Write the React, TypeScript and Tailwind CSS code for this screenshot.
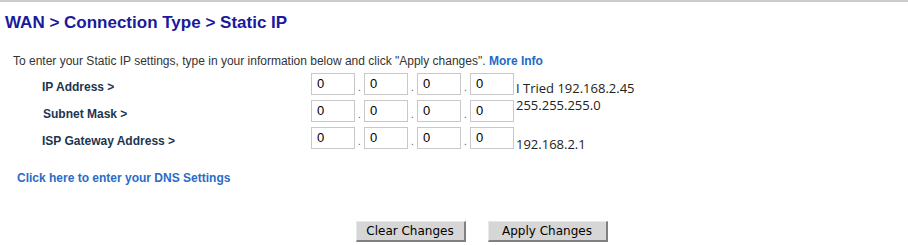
import React from "react";

const rows = [
  { label: "IP Address >", note: "I Tried 192.168.2.45", noteCls: "mt-[7px]", lcls: "pl-[42px]" },
  { label: "Subnet Mask >", note: "255.255.255.0", noteCls: "-mt-[3px]", lcls: "pl-[43px]" },
  { label: "ISP Gateway Address >", note: "192.168.2.1", noteCls: "mt-[9px]", lcls: "pl-[42px]" },
];

function Octet() {
  return (
    <div className="w-[44px] h-[22px] border border-[#c8c8c8] bg-white pl-[5px] text-[13px] leading-[20px] text-black [font-family:'Liberation_Sans',Arial,sans-serif]">
      0
    </div>
  );
}

export default function App() {
  return (
    <div className="w-[908px] h-[245px] bg-white border-t-2 border-[#cccccc] [font-family:'Liberation_Sans',Arial,sans-serif] overflow-hidden">
      <h1 className="pl-[5px] pt-[11px] text-[17px] leading-[20px] font-bold text-[#1a1a9c]">
        WAN &gt; Connection Type &gt; Static IP
      </h1>
      <p className="pl-[13px] mt-[21px] text-[12px] leading-[14px] text-[#333333]">
        To enter your Static IP settings, type in your information below and click "Apply changes".{" "}
        <span className="font-bold text-[#1f6ac6]">More Info</span>
      </p>
      <div className="mt-[5px] flex flex-col gap-[4px]">
        {rows.map((r, i) => (
          <div key={i} className={`flex items-start ${i === 2 ? "mt-[1px]" : ""}`}>
            <div className={`w-[311px] pt-[7px] text-[12px] leading-[14px] font-bold text-[#1c3550] ${r.lcls}`}>
              {r.label}
            </div>
            <div className="flex items-end">
              {[0, 1, 2, 3].map((k) => (
                <React.Fragment key={k}>
                  <Octet />
                  {k < 3 && <span className="w-[9px] text-center text-[10px] leading-[10px] text-[#555] mb-[2px]">.</span>}
                </React.Fragment>
              ))}
            </div>
            <div className={`pl-[2px] text-[13px] leading-[16px] text-[#222] [font-family:'Open_Sans',sans-serif] ${r.noteCls}`}>
              {r.note}
            </div>
          </div>
        ))}
      </div>
      <div className="pl-[17px] mt-[19px] text-[12px] leading-[14px] font-bold text-[#2a6cc8]">
        Click here to enter your DNS Settings
      </div>
      <div className="mt-[36px] flex justify-center gap-[22px] pl-[55px]">
        <button className="w-[110px] h-[21px] bg-[#d6d6d6] border border-[#e8e8e8] border-r-[#808080] border-b-[#808080] border-r-2 border-b-2 text-[12px] leading-[16px] text-black [font-family:'DejaVu_Sans',Verdana,sans-serif]">
          Clear Changes
        </button>
        <button className="w-[120px] h-[21px] bg-[#d6d6d6] border border-[#e8e8e8] border-r-[#808080] border-b-[#808080] border-r-2 border-b-2 text-[12px] leading-[16px] text-black [font-family:'DejaVu_Sans',Verdana,sans-serif]">
          Apply Changes
        </button>
      </div>
    </div>
  );
}
